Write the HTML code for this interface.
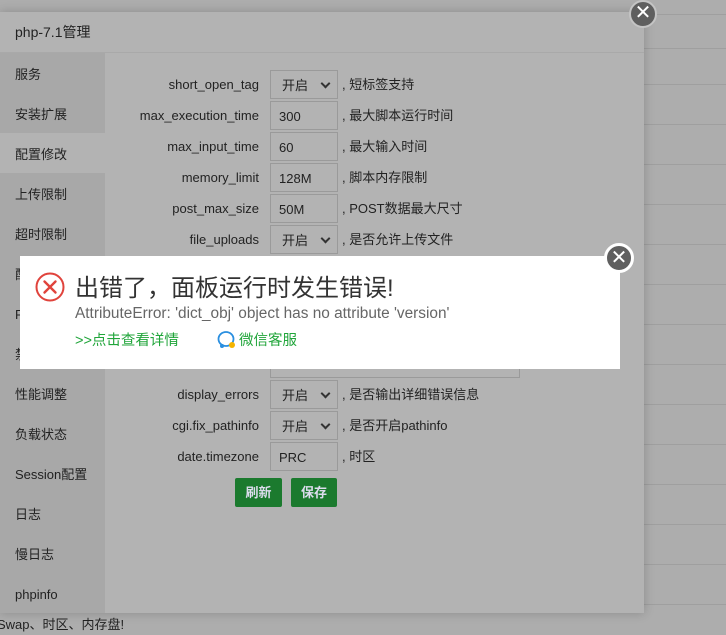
<!DOCTYPE html>
<html><head><meta charset="utf-8"><style>
*{margin:0;padding:0;box-sizing:border-box}
body{width:726px;height:635px;overflow:hidden;background:#adadad;font-family:"Liberation Sans","Noto Sans CJK SC",sans-serif;font-size:13px;color:#333;position:relative}
.ln{position:absolute;left:0;width:726px;height:1px;background:#9f9f9f}
.dlg{position:absolute;left:0;top:12px;width:644px;height:601px;background:#b3b3b3;box-shadow:0 0 10px rgba(0,0,0,.2)}
.hd{height:41px;line-height:41px;padding-left:15px;font-size:14px;color:#222;border-bottom:1px solid #a9a9a9}
.sb{position:absolute;left:0;top:41px;width:105px;height:560px;background:#a8a8a8}
.sb div{height:40px;line-height:43px;padding-left:15px;color:#222}
.sb .on{background:#b3b3b3}
.row{position:absolute;left:105px;height:29px;line-height:29px}
.lab{position:absolute;left:0;width:154px;text-align:right;color:#222}
.inp{position:absolute;left:165px;width:68px;height:29px;border:1px solid #9a9a9a;padding-left:8px;color:#222}
.sel::after{content:"";position:absolute;right:8px;top:9px;width:5px;height:5px;border-right:2px solid #333;border-bottom:2px solid #333;transform:rotate(45deg)}
.sel{padding-left:11px}
.ds{position:absolute;left:237px;color:#222;white-space:nowrap}
.btn{position:absolute;top:478px;height:29px;line-height:29px;background:#1b7a2e;color:#dde;text-align:center;border-radius:2px;font-size:13px;font-weight:bold}
.x{position:absolute;border-radius:50%;background:#5f5f5f;border:2px solid #ddd;color:#fff;text-align:center;font-size:20px}
.pop{position:absolute;left:20px;top:256px;width:600px;height:113px;background:#fff}
</style></head><body>
<div class="ln" style="top:14px"></div><div class="ln" style="top:48px"></div>
<div class="ln" style="top:84px"></div><div class="ln" style="top:124px"></div><div class="ln" style="top:164px"></div><div class="ln" style="top:204px"></div><div class="ln" style="top:244px"></div><div class="ln" style="top:284px"></div><div class="ln" style="top:324px"></div><div class="ln" style="top:364px"></div><div class="ln" style="top:404px"></div><div class="ln" style="top:444px"></div><div class="ln" style="top:484px"></div><div class="ln" style="top:524px"></div><div class="ln" style="top:564px"></div><div class="ln" style="top:604px"></div>
<div style="position:absolute;left:-3px;top:614px;font-size:13px;color:#222">Swap、时区、内存盘!</div>
<div class="dlg">
<div class="hd">php-7.1管理</div>
<div class="sb"><div>服务</div><div>安装扩展</div><div class="on">配置修改</div><div>上传限制</div><div>超时限制</div><div>配置文件</div><div>FPM配置</div><div>禁用函数</div><div>性能调整</div><div>负载状态</div><div>Session配置</div><div>日志</div><div>慢日志</div><div>phpinfo</div></div>
<div class="row" style="top:58px"><span class="lab">short_open_tag</span><span class="inp sel">开启</span><span class="ds">, 短标签支持</span></div>
<div class="row" style="top:89px"><span class="lab">max_execution_time</span><span class="inp">300</span><span class="ds">, 最大脚本运行时间</span></div>
<div class="row" style="top:120px"><span class="lab">max_input_time</span><span class="inp">60</span><span class="ds">, 最大输入时间</span></div>
<div class="row" style="top:151px"><span class="lab">memory_limit</span><span class="inp">128M</span><span class="ds">, 脚本内存限制</span></div>
<div class="row" style="top:182px"><span class="lab">post_max_size</span><span class="inp">50M</span><span class="ds">, POST数据最大尺寸</span></div>
<div class="row" style="top:213px"><span class="lab">file_uploads</span><span class="inp sel">开启</span><span class="ds">, 是否允许上传文件</span></div>
<div class="row" style="top:337px"><span class="inp" style="width:250px"></span></div>
<div class="row" style="top:368px"><span class="lab">display_errors</span><span class="inp sel">开启</span><span class="ds">, 是否输出详细错误信息</span></div>
<div class="row" style="top:399px"><span class="lab">cgi.fix_pathinfo</span><span class="inp sel">开启</span><span class="ds">, 是否开启pathinfo</span></div>
<div class="row" style="top:430px"><span class="lab">date.timezone</span><span class="inp">PRC</span><span class="ds">, 时区</span></div>
</div>
<div class="btn" style="left:235px;width:47px">刷新</div>
<div class="btn" style="left:291px;width:46px">保存</div>
<div class="x" style="left:629px;top:0;width:28px;height:28px;line-height:23px;border-color:#c4c4c4">✕</div>
<div class="pop">
<svg style="position:absolute;left:15px;top:16px" width="30" height="30" viewBox="0 0 30 30"><circle cx="15" cy="15" r="13.5" fill="none" stroke="#e0433c" stroke-width="2"/><path d="M9.5 9.5L20.5 20.5M20.5 9.5L9.5 20.5" stroke="#e0433c" stroke-width="2.4" stroke-linecap="round"/></svg>
<div style="position:absolute;left:55px;top:17px;font-size:24px;color:#333;line-height:32px">出错了，面板运行时发生错误!</div>
<div style="position:absolute;left:55px;top:49px;font-size:15.4px;color:#666">AttributeError: 'dict_obj' object has no attribute 'version'</div>
<div style="position:absolute;left:55px;top:73px;font-size:14.5px;color:#20a53a">&gt;&gt;点击查看详情</div>
<svg style="position:absolute;left:197px;top:74px" width="20" height="20" viewBox="0 0 20 20"><ellipse cx="9" cy="9" rx="7.5" ry="7" fill="none" stroke="#2a8fe0" stroke-width="1.8"/><circle cx="15" cy="15" r="3" fill="#f5b400"/><circle cx="5" cy="16" r="2" fill="#2a8fe0"/></svg>
<div style="position:absolute;left:219px;top:73px;font-size:14.5px;color:#20a53a">微信客服</div>
</div>
<div class="x" style="left:604px;top:243px;width:30px;height:30px;line-height:25px;border:3px solid #fff">✕</div>
</body></html>
